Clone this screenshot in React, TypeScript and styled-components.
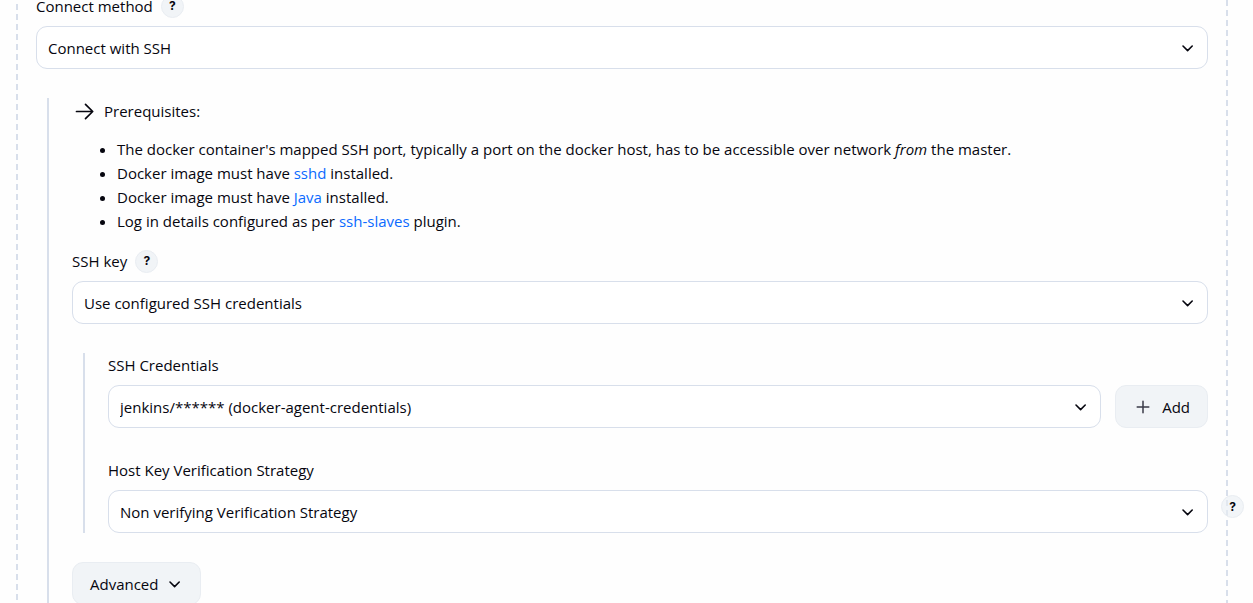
import React from "react";
import styled, { createGlobalStyle } from "styled-components";

const GlobalStyle = createGlobalStyle`
  *, *::before, *::after { box-sizing: border-box; }
  html { overflow: hidden; }
  body {
    margin: 0;
    background: #fefefe;
    color: #06060f;
    font-family: "Open Sans", "Noto Sans", sans-serif;
    font-size: 15px;
    line-height: 24px;
  }
`;

const line = "#d8dfeb";
const soft = "#f1f4f7";

const dash = `repeating-linear-gradient(to bottom, ${line} 0 6px, transparent 6px 10px)`;

const RepeatedChunk = styled.main`
  display: flow-root;
  margin: 0 25px 0 16px;
  padding: 0 20px;
  background:
    ${dash} left 4px / 2px 100% no-repeat,
    ${dash} right top / 2px 100% no-repeat;
  background-position: left 4px, right top;
`;

const Form = styled.form`
  margin-top: -6px;
`;

const Nested = styled.section`
  margin: 29px 0 0 11px;
  padding-left: 23px;
  border-left: 2px solid ${line};
`;

const LabelRow = styled.div`
  display: flex;
  align-items: center;
  gap: 8px;
  height: 24px;
  margin-bottom: 8px;
`;

const Field = styled.div`
  position: relative;

  & + & {
    margin-top: 30px;
  }
`;

const HelpButton = styled.button<{ $floating?: boolean }>`
  display: grid;
  place-items: center;
  width: 23px;
  height: 23px;
  padding: 0;
  border: 1px solid #e9edf2;
  border-radius: 50%;
  background: ${(p) => (p.$floating ? "rgba(233, 238, 243, 0.6)" : soft)};
  color: inherit;
  font: 700 12px/20px Inter, sans-serif;
  ${(p) => p.$floating && "position: absolute; right: -36px; bottom: 15px;"}
`;

const SelectBox = styled.div`
  display: grid;
  flex: 1;
  align-items: center;

  & > * {
    grid-area: 1 / 1;
  }

  & > svg {
    justify-self: end;
    margin-right: 12px;
    pointer-events: none;
  }
`;

const Select = styled.select`
  appearance: none;
  width: 100%;
  height: 43px;
  padding: 0 36px 0 11px;
  border: 1px solid ${line};
  border-radius: 11px;
  background: #fff;
  color: inherit;
  font: inherit;
`;

const ControlRow = styled.div`
  display: flex;
  gap: 14px;
`;

const Button = styled.button`
  display: flex;
  align-items: center;
  gap: 9px;
  height: 43px;
  padding: 0 17px;
  border: 1px solid #e9edf2;
  border-radius: 11px;
  background: ${soft};
  color: inherit;
  font: inherit;
`;

const Footer = styled.div`
  padding: 29px 0 24px;
`;

const Notice = styled.div`
  display: flex;
  align-items: center;
  gap: 10px;
  height: 25px;
  padding-left: 3px;
`;

const List = styled.ul`
  margin: 14px 0 16px;
  padding-left: 45px;
`;

const Link = styled.a`
  color: #0b6aff;
  text-decoration: none;
`;

const Chevron = () => (
  <svg width="16" height="16" viewBox="0 0 16 16" fill="none" stroke="currentColor" strokeWidth="1.600" strokeLinecap="round" strokeLinejoin="round" aria-hidden="true">
    <path d="M3 6l4.600 4.600L12.200 6" />
  </svg>
);

const Plus = () => (
  <svg width="20" height="20" viewBox="0 0 20 20" fill="none" stroke="#3a3a48" strokeWidth="1.500" strokeLinecap="round" aria-hidden="true">
    <path d="M10 4.200v11.600M4.200 10h11.600" />
  </svg>
);

const Arrow = () => (
  <svg width="19" height="18" viewBox="0 0 19 18" fill="none" stroke="currentColor" strokeWidth="1.700" strokeLinecap="round" strokeLinejoin="round" aria-hidden="true">
    <path d="M1.500 9.500h16M10.500 2.300l7.200 7.200-7.200 7.200" />
  </svg>
);

const Dropdown = ({ id, value }: { id: string; value: string }) => (
  <SelectBox>
    <Select id={id} defaultValue={value}>
      <option>{value}</option>
    </Select>
    <Chevron />
  </SelectBox>
);

const Help = ({ topic, floating }: { topic: string; floating?: boolean }) => (
  <HelpButton type="button" $floating={floating} aria-label={`Help for feature: ${topic}`}>
    ?
  </HelpButton>
);

export default function App() {
  return (
    <>
      <GlobalStyle />
      <RepeatedChunk>
        <Form>
          <Field>
            <LabelRow>
              <label htmlFor="connector">Connect method</label>
              <Help topic="Connect method" />
            </LabelRow>
            <Dropdown id="connector" value="Connect with SSH" />
          </Field>
          <Nested>
            <Notice>
              <Arrow />
              <span>Prerequisites:</span>
            </Notice>
            <List>
              <li>
                The docker container's mapped SSH port, typically a port on the docker host, has to be
                accessible over network <em>from</em> the master.
              </li>
              <li>
                Docker image must have <Link href="#sshd">sshd</Link> installed.
              </li>
              <li>
                Docker image must have <Link href="#java">Java</Link> installed.
              </li>
              <li>
                Log in details configured as per <Link href="#ssh-slaves">ssh-slaves</Link> plugin.
              </li>
            </List>
            <Field>
              <LabelRow>
                <label htmlFor="ssh-key">SSH key</label>
                <Help topic="SSH key" />
              </LabelRow>
              <Dropdown id="ssh-key" value="Use configured SSH credentials" />
            </Field>
            <Nested>
              <Field>
                <LabelRow>
                  <label htmlFor="credentials">SSH Credentials</label>
                </LabelRow>
                <ControlRow>
                  <Dropdown id="credentials" value="jenkins/****** (docker-agent-credentials)" />
                  <Button type="button">
                    <Plus />
                    Add
                  </Button>
                </ControlRow>
              </Field>
              <Field>
                <LabelRow>
                  <label htmlFor="host-key">Host Key Verification Strategy</label>
                </LabelRow>
                <Dropdown id="host-key" value="Non verifying Verification Strategy" />
                <Help topic="Host Key Verification Strategy" floating />
              </Field>
            </Nested>
            <Footer>
              <Button type="button">
                Advanced
                <Chevron />
              </Button>
            </Footer>
          </Nested>
        </Form>
      </RepeatedChunk>
    </>
  );
}
